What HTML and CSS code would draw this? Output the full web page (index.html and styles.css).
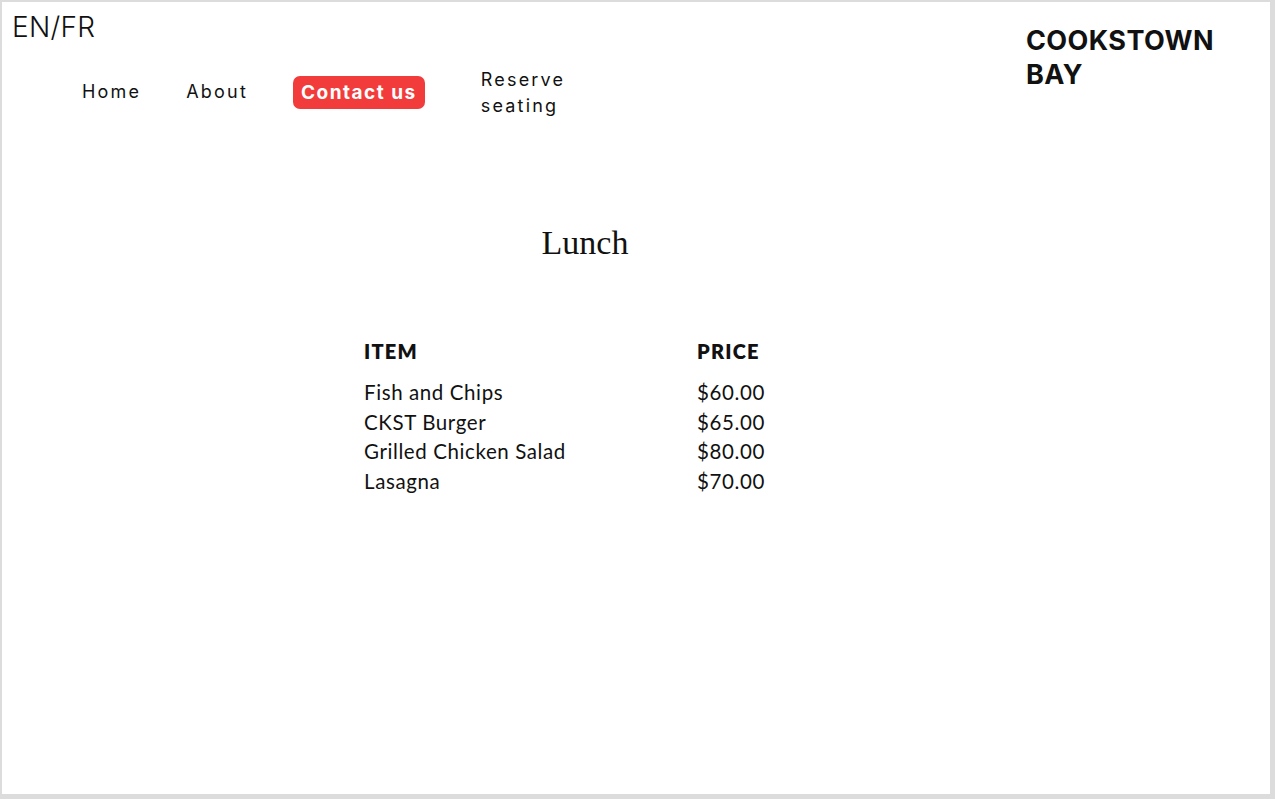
FILE: index.html
```html
<!DOCTYPE html>
<html lang="en">
<head>
<meta charset="utf-8">
<title>Cookstown Bay - Lunch</title>
<link rel="stylesheet" href="styles.css">
</head>
<body>
<div class="page">
  <header class="header">
    <div class="header-left">
      <div class="lang">EN/FR</div>
      <nav class="nav">
        <a class="nav-link" href="#">Home</a>
        <a class="nav-link" href="#">About</a>
        <a class="nav-btn" href="#">Contact us</a>
        <a class="nav-link nav-reserve" href="#">Reserve<br>seating</a>
      </nav>
    </div>
    <div class="brand">COOKSTOWN<br>BAY</div>
  </header>
  <main class="menu">
    <h1 class="menu-title">Lunch</h1>
    <div class="menu-table">
      <div class="th">ITEM</div>
      <div class="th">PRICE</div>
      <div class="td">Fish and Chips</div>
      <div class="td">$60.00</div>
      <div class="td">CKST Burger</div>
      <div class="td">$65.00</div>
      <div class="td">Grilled Chicken Salad</div>
      <div class="td">$80.00</div>
      <div class="td">Lasagna</div>
      <div class="td">$70.00</div>
    </div>
  </main>
</div>
</body>
</html>
```
FILE: styles.css
```css
html, body {
  margin: 0;
  padding: 0;
}
body {
  background: #dcdcdc;
  font-family: "Inter", "Liberation Sans", sans-serif;
  color: #111;
}
.page {
  background: #fff;
  margin: 2px 5px 0 2px;
  height: 792px;
  box-sizing: border-box;
}
.header {
  display: flex;
  justify-content: space-between;
}
.header-left {
  padding: 8px 0 0 10px;
}
.lang {
  font-size: 28px;
  font-weight: 300;
  line-height: 34px;
  letter-spacing: 0.3px;
}
.nav {
  display: flex;
  align-items: center;
  margin: 21px 0 0 70px;
}
.nav-link {
  color: #111;
  text-decoration: none;
  font-size: 18px;
  letter-spacing: 2.2px;
  line-height: 26px;
  margin-right: 45px;
}
.nav-btn {
  background: #f23b3b;
  color: #fff;
  text-decoration: none;
  font-weight: 700;
  font-size: 19px;
  letter-spacing: 1.5px;
  line-height: 33px;
  padding: 0 8px;
  border-radius: 7px;
  margin-right: 56px;
}
.nav-reserve {
  line-height: 26px;
  margin-top: 2px;
}
.brand {
  font-size: 27px;
  font-weight: 700;
  line-height: 34px;
  letter-spacing: 0.4px;
  padding: 22px 58px 0 0;
  width: 186px;
}
.menu {
  width: 442px;
  margin-left: 362px;
}
.menu-title {
  font-family: "Liberation Serif", "Times New Roman", serif;
  font-weight: 400;
  font-size: 34px;
  text-align: center;
  margin: 104px 0 0 0;
  line-height: 40px;
}
.menu-table {
  display: grid;
  grid-template-columns: 333px 100px;
  margin-top: 74px;
  font-family: "Lato", "Liberation Sans", sans-serif;
}
.th {
  font-weight: 800;
  font-size: 20px;
  letter-spacing: 1.2px;
  line-height: 28px;
  margin-bottom: 13px;
}
.td {
  font-size: 20.5px;
  font-weight: 400;
  letter-spacing: 0.6px;
  line-height: 29.5px;
}
```
